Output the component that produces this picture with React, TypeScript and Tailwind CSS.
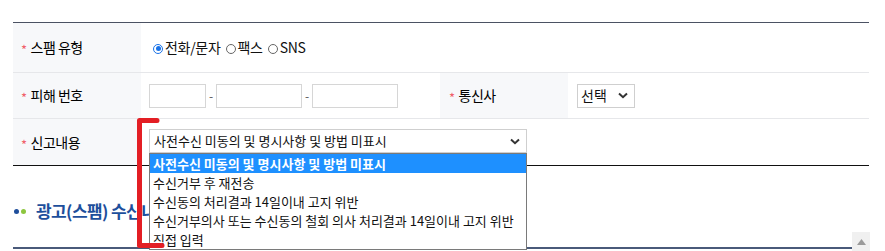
import React from "react";

const Star = () => <span className="text-[#f0606a] text-[13px] mr-[4px] leading-none relative top-[2px]">*</span>;

const Label = ({ children, w = "w-[128px]", pl = "pl-[8px]" }: { children: React.ReactNode; w?: string; pl?: string }) => (
  <div className={`${w} shrink-0 bg-[#f7f8fa] flex items-center ${pl} text-[14px] text-[#000] tracking-[-0.5px]`}>
    <Star />
    {children}
  </div>
);

const Radio = ({ checked }: { checked?: boolean }) => (
  <span className={`inline-block w-[10px] h-[10px] rounded-full border ${checked ? "border-[#1a73e8]" : "border-[#666]"} relative mr-[2px] top-[1px]`}>
    {checked && <span className="absolute left-[1.5px] top-[1.5px] w-[5px] h-[5px] rounded-full bg-[#1a73e8]" />}
  </span>
);

const Chevron = () => (
  <svg width="10" height="7" viewBox="0 0 10 7">
    <path d="M1 1.5 L5 5.2 L9 1.5" fill="none" stroke="#333" strokeWidth="2" />
  </svg>
);

const options = [
  "사전수신 미동의 및 명시사항 및 방법 미표시",
  "수신거부 후 재전송",
  "수신동의 처리결과 14일이내 고지 위반",
  "수신거부의사 또는 수신동의 철회 의사 처리결과 14일이내 고지 위반",
  "직접 입력",
];

export default function App() {
  return (
    <div
      className="w-[885px] h-[251px] bg-white relative overflow-hidden text-[#222]"
      style={{ fontFamily: '"Noto Sans CJK KR", "Noto Sans", sans-serif' }}
    >
      <div className="ml-[13px] w-[856px] pt-[22px]">
        <div className="border-t border-[#4b5263]">
          {/* row 1 */}
          <div className="flex h-[50px] border-b border-[#e6e7ea]">
            <Label>스팸 유형</Label>
            <div className="flex items-center pl-[12px] text-[14px] text-[#111] tracking-[-0.3px]">
              <Radio checked />
              <span>전화/문자</span>
              <span className="ml-[5px]"><Radio /></span>
              <span>팩스</span>
              <span className="ml-[5px]"><Radio /></span>
              <span>SNS</span>
            </div>
          </div>
          {/* row 2 */}
          <div className="flex h-[46px] border-b border-[#e6e7ea]">
            <Label>피해 번호</Label>
            <div className="w-[299px] shrink-0 flex items-center pl-[8px]">
              <div className="w-[57px] h-[24px] border border-[#d6d6d6]" />
              <span className="w-[10px] text-center text-[12px] text-[#555]">-</span>
              <div className="w-[86px] h-[24px] border border-[#d6d6d6]" />
              <span className="w-[10px] text-center text-[12px] text-[#555]">-</span>
              <div className="w-[86px] h-[24px] border border-[#d6d6d6]" />
            </div>
            <Label pl="pl-[9px]">통신사</Label>
            <div className="flex items-center pl-[9px]">
              <div className="w-[58px] h-[24px] border border-[#cfcfcf] flex items-center justify-between pl-[3px] pr-[6px] text-[14px] text-[#111]">
                <span>선택</span>
                <Chevron />
              </div>
            </div>
          </div>
          {/* row 3 */}
          <div className="flex h-[47px] border-b border-[#111]">
            <Label>신고내용</Label>
            <div className="flex items-center pl-[8px] pb-[2px]">
              <div className="w-[378px] h-[24px] border border-[#cfcfcf] flex items-center justify-between pl-[4px] pr-[6px] text-[13px] text-[#111]">
                <span>{options[0]}</span>
                <Chevron />
              </div>
            </div>
          </div>
        </div>
        {/* heading */}
        <div className="h-[83px] border-b-2 border-[#4a5a7a] pt-[33px]">
          <div className="flex items-center">
            <span className="w-[5px] h-[5px] rounded-full bg-[#1f4e9b] ml-[1px]" />
            <span className="w-[5px] h-[5px] rounded-full bg-[#8dc63f] ml-[2px]" />
            <span className="ml-[10px] text-[17px] font-bold text-[#1d4f9c] tracking-[-0.6px] leading-[24px]">
              광고(스팸) 수신내역
            </span>
          </div>
        </div>
      </div>

      {/* open dropdown list */}
      <div className="absolute left-[149px] top-[153px] w-[378px] border border-[#7a7a7a] bg-white text-[13px]">
        {options.map((o, i) => (
          <div
            key={o}
            className={`h-[19px] leading-[19px] pl-[3px] whitespace-nowrap ${i === 0 ? "bg-[#1e90ff] text-white font-bold" : "text-[#111]"}`}
          >
            {o}
          </div>
        ))}
      </div>

      {/* red bracket annotation */}
      <svg className="absolute left-0 top-0" width="885" height="251" viewBox="0 0 885 251">
        <path d="M157 120.5 L139.5 120.5 L139.5 245.5 L162 245.5" fill="none" stroke="#e31e24" strokeWidth="5" strokeLinejoin="round" strokeLinecap="round" />
      </svg>

      {/* scroll top button */}
      <div className="absolute left-[852px] top-[232px] w-[18px] h-[20px] bg-[#f0f0f0] flex items-center justify-center">
        <svg width="9" height="6" viewBox="0 0 9 6">
          <path d="M4.5 0 L9 6 L0 6 Z" fill="#9a9a9a" />
        </svg>
      </div>
    </div>
  );
}
